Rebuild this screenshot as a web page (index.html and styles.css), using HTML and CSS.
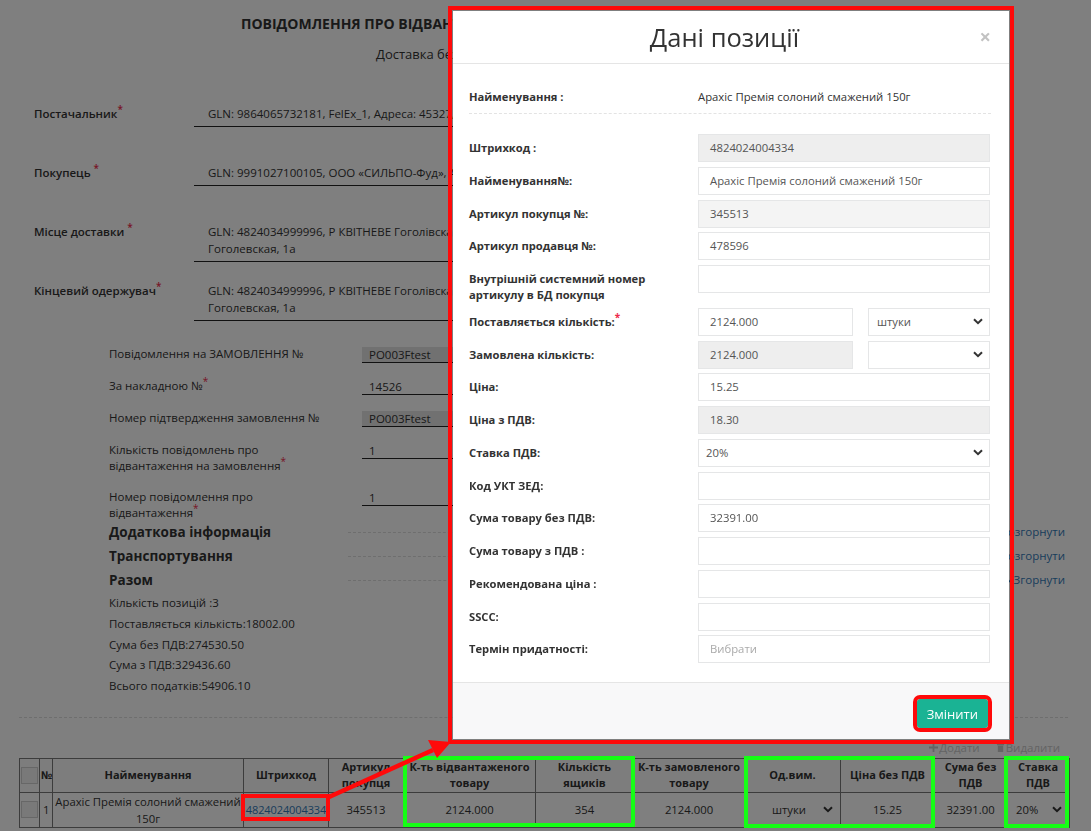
FILE: index.html
```html
<!DOCTYPE html>
<html lang="uk">
<head>
  <meta charset="UTF-8">
  <meta name="viewport" content="width=device-width, initial-scale=1.0">
  <title>Повідомлення про відвантаження</title>
  <link rel="stylesheet" href="styles.css">
</head>
<body>
  <div class="page">
    <h1 class="doc-title">ПОВІДОМЛЕННЯ ПРО ВІДВАНТАЖЕННЯ № 14526</h1>
    <p class="doc-sub">Доставка без повернення тари</p>

    <div class="parties">
      <div class="party">
        <div class="party-label">Постачальник<sup class="req">*</sup></div>
        <div class="party-val">GLN: 9864065732181, FelEx_1, Адреса: 45327, м. Київ</div>
      </div>
      <div class="party">
        <div class="party-label">Покупець <sup class="req">*</sup></div>
        <div class="party-val">GLN: 9991027100105, ООО «СИЛЬПО-Фуд», Адреса: 04073, м. Київ</div>
      </div>
      <div class="party">
        <div class="party-label">Місце доставки <sup class="req">*</sup></div>
        <div class="party-val">GLN: 4824034999996, Р КВІТНЕВЕ Гоголівска, Адреса: 08000, Київська обл., с. Квітневе, вул.<br>Гоголевская, 1а</div>
      </div>
      <div class="party">
        <div class="party-label">Кінцевий одержувач<sup class="req">*</sup></div>
        <div class="party-val">GLN: 4824034999996, Р КВІТНЕВЕ Гоголівска, Адреса: 08000, Київська обл., с. Квітневе, вул.<br>Гоголевская, 1а</div>
      </div>
    </div>

    <div class="order">
      <div class="order-row">
        <div class="order-label">Повідомлення на ЗАМОВЛЕННЯ №</div>
        <div class="order-input ro">PO003Ftest</div>
      </div>
      <div class="order-row">
        <div class="order-label">За накладною №<sup class="req">*</sup></div>
        <div class="order-input">14526</div>
      </div>
      <div class="order-row">
        <div class="order-label">Номер підтвердження замовлення №</div>
        <div class="order-input ro">PO003Ftest</div>
      </div>
      <div class="order-row">
        <div class="order-label">Кількість повідомлень про відвантаження на замовлення<sup class="req">*</sup></div>
        <div class="order-input">1</div>
      </div>
      <div class="order-row">
        <div class="order-label">Номер повідомлення про відвантаження<sup class="req">*</sup></div>
        <div class="order-input">1</div>
      </div>
    </div>

    <div class="section">
      <h3>Додаткова інформація</h3>
      <span class="rule"></span>
      <a href="#" class="toggle"><svg class="caret" viewBox="0 0 8 6"><path d="M1 1l3 3.5L7 1" /></svg>Розгорнути</a>
    </div>
    <div class="section">
      <h3>Транспортування</h3>
      <span class="rule"></span>
      <a href="#" class="toggle"><svg class="caret" viewBox="0 0 8 6"><path d="M1 1l3 3.5L7 1" /></svg>Розгорнути</a>
    </div>
    <div class="section">
      <h3>Разом</h3>
      <span class="rule"></span>
      <a href="#" class="toggle"><svg class="caret" viewBox="0 0 8 6"><path d="M1 5l3-3.5L7 5" /></svg>Згорнути</a>
    </div>

    <ul class="totals">
      <li>Кількість позицій :3</li>
      <li>Поставляється кількість:18002.00</li>
      <li>Сума без ПДВ:274530.50</li>
      <li>Сума з ПДВ:329436.60</li>
      <li>Всього податків:54906.10</li>
    </ul>

    <hr class="split">

    <div class="actions">
      <span class="act"><svg class="ico" viewBox="0 0 10 10"><path d="M4 0h2v4h4v2H6v4H4V6H0V4h4z" /></svg>Додати</span>
      <span class="act"><svg class="ico" viewBox="0 0 10 10"><path d="M1 1h8v1.5H1zM2 3h6v7H2z" /></svg>Видалити</span>
    </div>

    <div class="grid-wrap">
      <table class="grid">
        <colgroup>
          <col class="w-chk"><col class="w-num"><col class="w-name"><col class="w-code">
          <col class="w-art"><col class="w-ship"><col class="w-box"><col class="w-ord">
          <col class="w-unit"><col class="w-price"><col class="w-sum"><col class="w-vat">
        </colgroup>
        <thead>
          <tr>
            <th><span class="chk"></span></th>
            <th>№</th>
            <th>Найменування</th>
            <th>Штрихкод</th>
            <th>Артикул покупця</th>
            <th>К-ть відвантаженого товару</th>
            <th>Кількість ящиків</th>
            <th>К-ть замовленого товару</th>
            <th>Од.вим.</th>
            <th>Ціна без ПДВ</th>
            <th>Сума без ПДВ</th>
            <th>Ставка ПДВ</th>
          </tr>
        </thead>
        <tbody>
          <tr>
            <td><span class="chk"></span></td>
            <td class="num">1</td>
            <td>Арахіс Премія солоний смажений 150г</td>
            <td class="code-cell"><a href="#" class="code">4824024004334</a></td>
            <td>345513</td>
            <td>2124.000</td>
            <td>354</td>
            <td>2124.000</td>
            <td><span class="cell-select unit">штуки<svg class="chev" viewBox="0 0 10 7"><path d="M1 1.2l4 4 4-4" /></svg></span></td>
            <td>15.25</td>
            <td>32391.00</td>
            <td><span class="cell-select vat">20%<svg class="chev" viewBox="0 0 10 7"><path d="M1 1.2l4 4 4-4" /></svg></span></td>
          </tr>
        </tbody>
      </table>
      <span class="mark mark-qty"></span>
      <span class="mark mark-price"></span>
      <span class="mark mark-vat"></span>
      <span class="mark mark-code"></span>
    </div>
  </div>

  <div class="backdrop"></div>

  <div class="modal">
    <div class="modal-head">
      <h2 class="modal-title">Дані позиції</h2>
      <span class="modal-close">×</span>
    </div>
    <div class="modal-body">
      <div class="item-name">
        <span class="item-key">Найменування :</span>
        <span>Арахіс Премія солоний смажений 150г</span>
      </div>

      <div class="field">
        <div class="field-label">Штрихкод :</div>
        <div class="control ro">4824024004334</div>
      </div>
      <div class="field">
        <div class="field-label">Найменування№:</div>
        <div class="control">Арахіс Премія солоний смажений 150г</div>
      </div>
      <div class="field">
        <div class="field-label">Артикул покупця №:</div>
        <div class="control ro-light">345513</div>
      </div>
      <div class="field">
        <div class="field-label">Артикул продавця №:</div>
        <div class="control">478596</div>
      </div>
      <div class="field">
        <div class="field-label">Внутрішній системний номер артикулу в БД покупця</div>
        <div class="control"></div>
      </div>
      <div class="field">
        <div class="field-label">Поставляється кількість:<sup class="req">*</sup></div>
        <div class="pair">
          <div class="control">2124.000</div>
          <div class="control select">штуки<svg class="chev" viewBox="0 0 10 7"><path d="M1 1.2l4 4 4-4" /></svg></div>
        </div>
      </div>
      <div class="field">
        <div class="field-label">Замовлена кількість:</div>
        <div class="pair">
          <div class="control ro">2124.000</div>
          <div class="control select"><svg class="chev" viewBox="0 0 10 7"><path d="M1 1.2l4 4 4-4" /></svg></div>
        </div>
      </div>
      <div class="field">
        <div class="field-label">Ціна:</div>
        <div class="control">15.25</div>
      </div>
      <div class="field">
        <div class="field-label">Ціна з ПДВ:</div>
        <div class="control ro">18.30</div>
      </div>
      <div class="field">
        <div class="field-label">Ставка ПДВ:</div>
        <div class="control select tight">20%<svg class="chev" viewBox="0 0 10 7"><path d="M1 1.2l4 4 4-4" /></svg></div>
      </div>
      <div class="field">
        <div class="field-label">Код УКТ ЗЕД:</div>
        <div class="control"></div>
      </div>
      <div class="field">
        <div class="field-label">Сума товару без ПДВ:</div>
        <div class="control">32391.00</div>
      </div>
      <div class="field">
        <div class="field-label">Сума товару з ПДВ :</div>
        <div class="control"></div>
      </div>
      <div class="field">
        <div class="field-label">Рекомендована ціна :</div>
        <div class="control"></div>
      </div>
      <div class="field">
        <div class="field-label">SSCC:</div>
        <div class="control"></div>
      </div>
      <div class="field">
        <div class="field-label">Термін придатності:</div>
        <div class="control placeholder">Вибрати</div>
      </div>
    </div>
    <div class="modal-foot">
      <button class="btn-save">Змінити</button>
    </div>
  </div>

  <!-- pointer from the barcode cell to the edit dialog -->
  <svg class="pointer" viewBox="0 0 1091 831">
    <line x1="329" y1="797" x2="433" y2="750" />
    <polygon points="451,742 437,758 428,740" />
  </svg>
</body>
</html>
```

FILE: styles.css
```css
html, body {
  margin: 0;
  padding: 0;
  background: #fff;
}

body {
  width: 1091px;
  height: 831px;
  overflow: hidden;
  font-family: "Open Sans", "Liberation Sans", sans-serif;
  font-size: 11.5px;
  color: #333;
}

a { color: #337ab7; text-decoration: none; }

.req {
  color: #ee2a4a;
  font-size: 10px;
  line-height: 0;
  vertical-align: 5px;
}

/* ---------- document form (under the dialog) ---------- */

.page { padding: 0 23px 0 19px; }

.doc-title {
  margin: 15px 0 0 222px;
  font-size: 14px;
  font-weight: 700;
  line-height: 18px;
}

.doc-sub {
  margin: 12px 0 0 357px;
  font-size: 13px;
  line-height: 18px;
}

.parties { margin: 42px 180px 0 15px; }

.party {
  display: grid;
  grid-template-columns: 160px 1fr;
  align-items: start;
  min-height: 59px;
}

.party-label { font-weight: 600; line-height: 17px; }

.party-val {
  padding: 0 0 4px 14px;
  line-height: 17px;
  border-bottom: 1px solid #222;
  white-space: nowrap;
}

.order { margin: 5px 0 0 90px; }

.order-row {
  display: grid;
  grid-template-columns: 222px 240px;
  column-gap: 31px;
  align-items: start;
  margin-bottom: 15px;
}
.order-row:last-child { margin-bottom: -1px; }

.order-label { line-height: 16px; }

.order-input {
  height: 15px;
  margin-top: 1px;
  padding: 0 7px;
  line-height: 15px;
  border-bottom: 1px solid #222;
}
.order-input.ro { background: #e2e2e2; }

.section {
  display: grid;
  grid-template-columns: 239px 1fr auto;
  align-items: center;
  margin-left: 90px;
  line-height: 24px;
}
.section h3 { margin: 0; font-size: 13.5px; font-weight: 700; }
.section .rule { border-top: 1px dashed #ddd; margin-right: 10px; }

.toggle { display: flex; align-items: center; margin-right: 3px; }
.caret { width: 8px; height: 6px; margin-right: 3px; fill: none; stroke: #337ab7; stroke-width: 1.6; }

.totals {
  margin: 1px 0 0 90px;
  padding: 0;
  list-style: none;
}
.totals li { line-height: 20.8px; }

.split {
  margin: 20px 0 0;
  border: 0;
  border-top: 1px dashed #ddd;
}

.actions {
  display: flex;
  justify-content: flex-end;
  gap: 16px;
  margin-top: 21px;
  padding-right: 8px;
  line-height: 17px;
  color: #c8c8c8;
}
.act { display: flex; align-items: center; }
.ico { width: 9px; height: 9px; fill: #c8c8c8; margin-right: 1px; }

/* ---------- items table ---------- */

.grid-wrap { position: relative; margin-top: 2px; }

.grid {
  width: 1050px;
  table-layout: fixed;
  border-collapse: collapse;
  border: 1px solid #787878;
}

.w-chk { width: 20px; }
.w-num { width: 13px; }
.w-name { width: 191px; }
.w-code { width: 85px; }
.w-art { width: 75px; }
.w-ship { width: 132px; }
.w-box { width: 98px; }
.w-ord { width: 111px; }
.w-unit { width: 96px; }
.w-price { width: 94px; }
.w-sum { width: 72px; }
.w-vat { width: 63px; }

.grid th,
.grid td {
  border: 1px solid #787878;
  padding: 0 1px;
  text-align: center;
  vertical-align: middle;
  overflow: hidden;
}

.grid th {
  height: 33px;
  font-size: 11px;
  font-weight: 700;
  line-height: 16px;
  background: #fbfbfb;
}

.grid td { height: 34px; font-size: 11.3px; line-height: 17px; }
.grid td.num { text-align: left; padding-left: 3px; }
.grid td.code-cell { padding: 0; overflow: visible; }
.code { font-size: 11px; letter-spacing: -0.1px; }

.chk {
  display: block;
  width: 15px;
  height: 15px;
  margin: 0 auto;
  background: #f2f2f2;
  border: 1px solid #cfcfcf;
}

.cell-select {
  display: flex;
  align-items: center;
  justify-content: space-between;
}
.cell-select.unit { padding: 0 6px 0 26px; }
.cell-select.vat { padding: 0 6px 0 8px; }

.chev { width: 10px; height: 7px; fill: none; stroke: #333; stroke-width: 2; }

/* hand-drawn highlights on top of the screen */
.mark {
  position: absolute;
  z-index: 30;
  box-sizing: border-box;
  border: 4px solid #16ff16;
}
.mark-qty { left: 384px; top: -2px; width: 232px; height: 71px; }
.mark-price { left: 725px; top: -2px; width: 191px; height: 72px; }
.mark-vat { left: 985px; top: -2px; width: 65px; height: 72px; }
.mark-code { left: 222px; top: 36px; width: 89px; height: 27px; border-color: #ff0a0a; }

.pointer {
  position: absolute;
  left: 0;
  top: 0;
  width: 1091px;
  height: 831px;
  z-index: 30;
  pointer-events: none;
}
.pointer line { stroke: #ff0a0a; stroke-width: 4.5; }
.pointer polygon { fill: #ff0a0a; }

/* ---------- dialog ---------- */

.backdrop {
  position: fixed;
  inset: 0;
  z-index: 10;
  background: rgba(0, 0, 0, 0.5);
}

.modal {
  position: fixed;
  left: 453px;
  top: 11px;
  z-index: 20;
  width: 556px;
  font-size: 11.3px;
  background: #fff;
  outline: 4px solid #ff0a0a;
  outline-offset: 1px;
}

.modal-head {
  position: relative;
  height: 52px;
  display: flex;
  align-items: center;
  justify-content: center;
  padding-right: 13px;
  border-bottom: 1px solid #e5e5e5;
}

.modal-title {
  margin: 0;
  font-size: 25.5px;
  font-weight: 400;
  color: #333;
}

.modal-close {
  position: absolute;
  right: 18px;
  top: 12px;
  font-size: 20px;
  font-weight: 700;
  color: #c2c2c2;
}

.modal-body { padding: 24px 18px 14px 16px; }

.item-name {
  display: grid;
  grid-template-columns: 229px 1fr;
  line-height: 17px;
  padding-bottom: 8px;
  margin-bottom: 20px;
  border-bottom: 1px dashed #e3e3e3;
}
.item-key { font-weight: 700; font-size: 11.2px; }

.field {
  display: grid;
  grid-template-columns: 229px 292px;
  align-items: start;
  margin-bottom: 4.75px;
}

.field-label {
  padding: 6px 15px 0 0;
  font-size: 11.2px;
  font-weight: 700;
  line-height: 16px;
}

.control {
  box-sizing: border-box;
  height: 28px;
  padding: 0 11px;
  line-height: 26px;
  border: 1px solid #e5e6e7;
  background: #fff;
  color: #555;
  white-space: nowrap;
}
.control.ro { background: #eee; }
.control.ro-light { background: #f4f4f4; }
.control.placeholder { color: #aaa; }

.control.select {
  display: flex;
  align-items: center;
  justify-content: space-between;
  padding: 0 6px 0 8px;
}
.control.select.tight { padding-left: 7px; }
.control.select .chev { margin-left: auto; }

.pair {
  display: grid;
  grid-template-columns: 155px 122px;
  column-gap: 15px;
}

.modal-foot {
  display: flex;
  justify-content: flex-end;
  padding: 16px 21px 11px;
  border-top: 1px solid #e5e5e5;
  background: #f8f8f9;
}

.btn-save {
  height: 29px;
  padding: 0 10px;
  border: 0;
  border-radius: 3px;
  background: #1ab394;
  color: #fff;
  font-family: inherit;
  font-size: 13px;
  outline: 4px solid #ff0a0a;
}
```
